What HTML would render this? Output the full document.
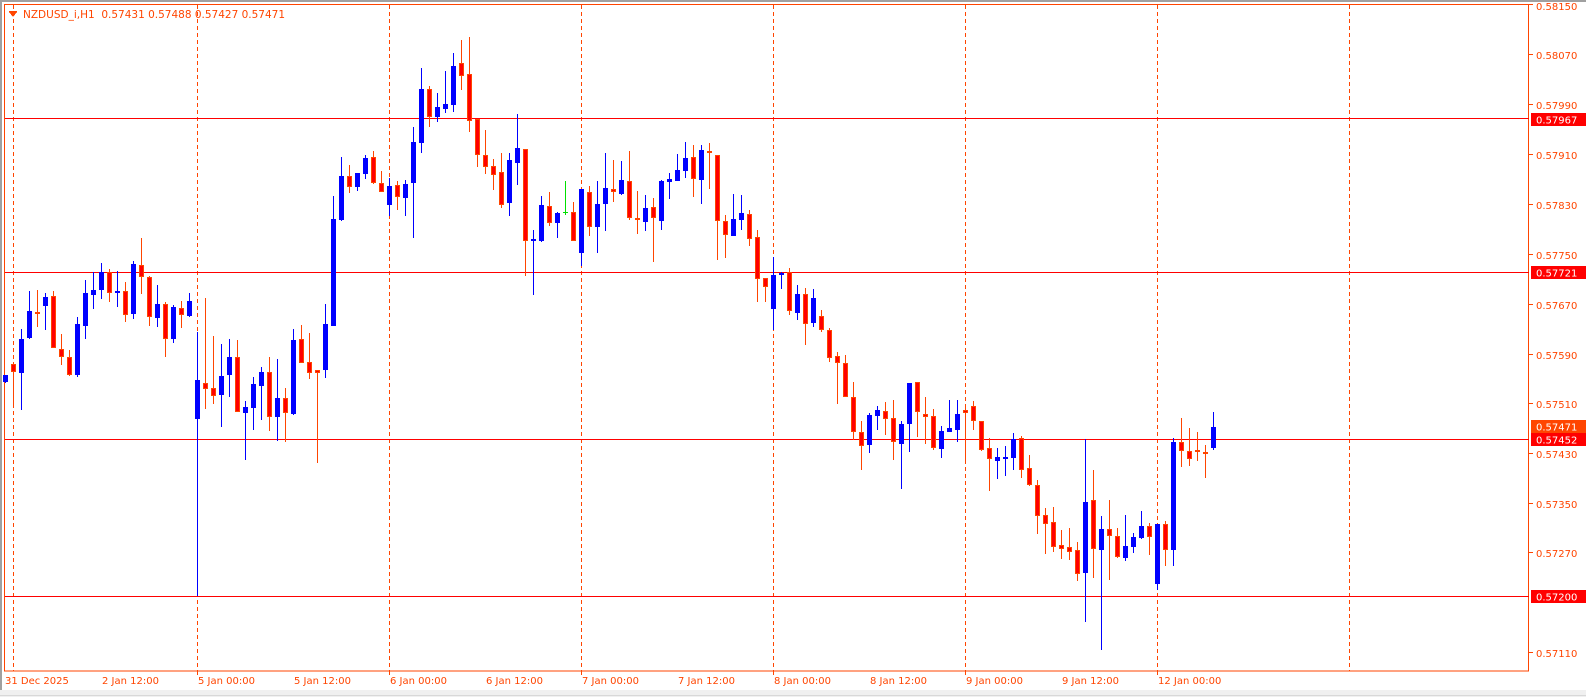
<!DOCTYPE html>
<html><head><meta charset="utf-8"><style>
html,body{margin:0;padding:0;background:#fff;width:1586px;height:697px;overflow:hidden}
svg{display:block}
text{font-family:"DejaVu Sans","Liberation Sans",sans-serif;font-size:10px;fill:#ff4500}
.hd{white-space:pre;font-size:10.5px}
.bl line{stroke:#0000ff}.bl rect{fill:#0000ff}
.rd line{stroke:#ff4500}.rd rect{fill:#ff0000;stroke:#ff4500;stroke-width:1}
</style></head><body>
<svg width="1586" height="697" xmlns="http://www.w3.org/2000/svg" shape-rendering="crispEdges">
<rect x="0" y="0" width="1586" height="697" fill="#fff"/>
<rect x="0" y="0" width="1586" height="2" fill="#a0a0a0"/>
<rect x="0" y="0" width="2" height="697" fill="#a0a0a0"/>
<rect x="0" y="690" width="1586" height="7" fill="#f0f0f0"/>
<line x1="0" y1="695.5" x2="1586" y2="695.5" stroke="#d8d8d8"/>
<rect x="4.5" y="4.5" width="1524" height="666.5" fill="none" stroke="#ff4500"/>
<g stroke="#ff4500" stroke-dasharray="4,3">
<line x1="13.5" y1="5" x2="13.5" y2="671"/><line x1="197.5" y1="5" x2="197.5" y2="671"/>
<line x1="389.5" y1="5" x2="389.5" y2="671"/><line x1="581.5" y1="5" x2="581.5" y2="671"/>
<line x1="773.5" y1="5" x2="773.5" y2="671"/><line x1="965.5" y1="5" x2="965.5" y2="671"/>
<line x1="1157.5" y1="5" x2="1157.5" y2="671"/><line x1="1349.5" y1="5" x2="1349.5" y2="671"/>
</g>
<g stroke="#ff0000">
<line x1="5" y1="118.5" x2="1529" y2="118.5"/><line x1="5" y1="272.5" x2="1529" y2="272.5"/>
<line x1="5" y1="439.5" x2="1529" y2="439.5"/><line x1="5" y1="596.5" x2="1529" y2="596.5"/>
</g>
<rect x="9" y="11" width="8" height="1" fill="#ff4500"/>
<polygon points="9,12 17,12 13,17" fill="#ff4500"/>
<text class="hd" x="23" y="18" xml:space="preserve">NZDUSD_i,H1  0.57431 0.57488 0.57427 0.57471</text>
<g stroke="#ff4500">
<line x1="1529" y1="4.5" x2="1533" y2="4.5"/><line x1="1529" y1="54.5" x2="1533" y2="54.5"/><line x1="1529" y1="104.5" x2="1533" y2="104.5"/><line x1="1529" y1="154.5" x2="1533" y2="154.5"/><line x1="1529" y1="204.5" x2="1533" y2="204.5"/><line x1="1529" y1="254.5" x2="1533" y2="254.5"/><line x1="1529" y1="304.5" x2="1533" y2="304.5"/><line x1="1529" y1="354.5" x2="1533" y2="354.5"/><line x1="1529" y1="403.5" x2="1533" y2="403.5"/><line x1="1529" y1="453.5" x2="1533" y2="453.5"/><line x1="1529" y1="503.5" x2="1533" y2="503.5"/><line x1="1529" y1="552.5" x2="1533" y2="552.5"/><line x1="1529" y1="652.5" x2="1533" y2="652.5"/>
</g>
<g>
<text x="1536" y="10">0.58150</text><text x="1536" y="59">0.58070</text><text x="1536" y="109">0.57990</text><text x="1536" y="159">0.57910</text><text x="1536" y="209">0.57830</text><text x="1536" y="259">0.57750</text><text x="1536" y="309">0.57670</text><text x="1536" y="359">0.57590</text><text x="1536" y="408">0.57510</text><text x="1536" y="458">0.57430</text><text x="1536" y="508">0.57350</text><text x="1536" y="557">0.57270</text><text x="1536" y="657">0.57110</text>
</g>
<rect x="1531" y="113" width="55" height="13" fill="#ff0000"/><text x="1536" y="123.5" style="fill:#fff">0.57967</text>
<rect x="1531" y="266" width="55" height="13" fill="#ff0000"/><text x="1536" y="276.5" style="fill:#fff">0.57721</text>
<rect x="1531" y="420" width="55" height="13" fill="#ff4500"/><text x="1536" y="430.5" style="fill:#fff">0.57471</text>
<rect x="1531" y="433" width="55" height="13" fill="#ff0000"/><text x="1536" y="443.5" style="fill:#fff">0.57452</text>
<rect x="1531" y="590" width="55" height="13" fill="#ff0000"/><text x="1536" y="600.5" style="fill:#fff">0.57200</text>
<g stroke="#ff4500"><line x1="197.5" y1="671" x2="197.5" y2="675"/><line x1="389.5" y1="671" x2="389.5" y2="675"/><line x1="581.5" y1="671" x2="581.5" y2="675"/><line x1="773.5" y1="671" x2="773.5" y2="675"/><line x1="965.5" y1="671" x2="965.5" y2="675"/><line x1="1157.5" y1="671" x2="1157.5" y2="675"/></g>
<text x="5" y="684">31 Dec 2025</text><text x="102" y="684">2 Jan 12:00</text><text x="198" y="684">5 Jan 00:00</text><text x="294" y="684">5 Jan 12:00</text><text x="390" y="684">6 Jan 00:00</text><text x="486" y="684">6 Jan 12:00</text><text x="582" y="684">7 Jan 00:00</text><text x="678" y="684">7 Jan 12:00</text><text x="774" y="684">8 Jan 00:00</text><text x="870" y="684">8 Jan 12:00</text><text x="966" y="684">9 Jan 00:00</text><text x="1062" y="684">9 Jan 12:00</text><text x="1158" y="684">12 Jan 00:00</text>
<g class="bl">
<line x1="5.5" y1="375" x2="5.5" y2="383"/><rect x="3" y="375" width="5" height="7"/>
<line x1="21.5" y1="329" x2="21.5" y2="410"/><rect x="19" y="339" width="5" height="34"/>
<line x1="29.5" y1="291" x2="29.5" y2="339"/><rect x="27" y="311" width="5" height="27"/>
<line x1="45.5" y1="293" x2="45.5" y2="330"/><rect x="43" y="297" width="5" height="9"/>
<line x1="77.5" y1="317" x2="77.5" y2="377"/><rect x="75" y="324" width="5" height="51"/>
<line x1="85.5" y1="280" x2="85.5" y2="339"/><rect x="83" y="293" width="5" height="33"/>
<line x1="93.5" y1="272" x2="93.5" y2="309"/><rect x="91" y="290" width="5" height="5"/>
<line x1="101.5" y1="263" x2="101.5" y2="299"/><rect x="99" y="272" width="5" height="18"/>
<line x1="117.5" y1="271" x2="117.5" y2="307"/><rect x="115" y="291" width="5" height="2"/>
<line x1="133.5" y1="261" x2="133.5" y2="319"/><rect x="131" y="264" width="5" height="50"/>
<line x1="157.5" y1="285" x2="157.5" y2="327"/><rect x="155" y="304" width="5" height="14"/>
<line x1="173.5" y1="305" x2="173.5" y2="343"/><rect x="171" y="307" width="5" height="32"/>
<line x1="189.5" y1="293" x2="189.5" y2="317"/><rect x="187" y="301" width="5" height="15"/>
<line x1="197.5" y1="332" x2="197.5" y2="596"/><rect x="195" y="380" width="5" height="39"/>
<line x1="221.5" y1="344" x2="221.5" y2="427"/><rect x="219" y="376" width="5" height="19"/>
<line x1="229.5" y1="339" x2="229.5" y2="397"/><rect x="227" y="357" width="5" height="18"/>
<line x1="245.5" y1="401" x2="245.5" y2="460"/><rect x="243" y="407" width="5" height="6"/>
<line x1="253.5" y1="377" x2="253.5" y2="430"/><rect x="251" y="384" width="5" height="24"/>
<line x1="261.5" y1="367" x2="261.5" y2="420"/><rect x="259" y="372" width="5" height="14"/>
<line x1="277.5" y1="359" x2="277.5" y2="441"/><rect x="275" y="398" width="5" height="19"/>
<line x1="293.5" y1="329" x2="293.5" y2="415"/><rect x="291" y="340" width="5" height="74"/>
<line x1="325.5" y1="304" x2="325.5" y2="378"/><rect x="323" y="324" width="5" height="46"/>
<line x1="333.5" y1="196" x2="333.5" y2="326"/><rect x="331" y="219" width="5" height="107"/>
<line x1="341.5" y1="157" x2="341.5" y2="221"/><rect x="339" y="176" width="5" height="44"/>
<line x1="357.5" y1="173" x2="357.5" y2="191"/><rect x="355" y="173" width="5" height="14"/>
<line x1="365.5" y1="155" x2="365.5" y2="179"/><rect x="363" y="158" width="5" height="16"/>
<line x1="389.5" y1="178" x2="389.5" y2="216"/><rect x="387" y="186" width="5" height="19"/>
<line x1="405.5" y1="180" x2="405.5" y2="216"/><rect x="403" y="184" width="5" height="14"/>
<line x1="413.5" y1="127" x2="413.5" y2="238"/><rect x="411" y="142" width="5" height="41"/>
<line x1="421.5" y1="68" x2="421.5" y2="153"/><rect x="419" y="89" width="5" height="54"/>
<line x1="437.5" y1="93" x2="437.5" y2="122"/><rect x="435" y="107" width="5" height="10"/>
<line x1="445.5" y1="71" x2="445.5" y2="113"/><rect x="443" y="104" width="5" height="5"/>
<line x1="453.5" y1="53" x2="453.5" y2="112"/><rect x="451" y="66" width="5" height="39"/>
<line x1="509.5" y1="153" x2="509.5" y2="216"/><rect x="507" y="160" width="5" height="43"/>
<line x1="517.5" y1="114" x2="517.5" y2="185"/><rect x="515" y="148" width="5" height="15"/>
<line x1="533.5" y1="230" x2="533.5" y2="295"/><rect x="531" y="239" width="5" height="2"/>
<line x1="541.5" y1="196" x2="541.5" y2="242"/><rect x="539" y="205" width="5" height="36"/>
<line x1="557.5" y1="212" x2="557.5" y2="238"/><rect x="555" y="213" width="5" height="10"/>
<line x1="581.5" y1="189" x2="581.5" y2="266"/><rect x="579" y="189" width="5" height="64"/>
<line x1="597.5" y1="181" x2="597.5" y2="253"/><rect x="595" y="204" width="5" height="23"/>
<line x1="605.5" y1="153" x2="605.5" y2="231"/><rect x="603" y="188" width="5" height="16"/>
<line x1="621.5" y1="161" x2="621.5" y2="195"/><rect x="619" y="180" width="5" height="14"/>
<line x1="645.5" y1="195" x2="645.5" y2="231"/><rect x="643" y="208" width="5" height="14"/>
<line x1="661.5" y1="180" x2="661.5" y2="230"/><rect x="659" y="181" width="5" height="40"/>
<line x1="669.5" y1="173" x2="669.5" y2="199"/><rect x="667" y="179" width="5" height="3"/>
<line x1="677.5" y1="154" x2="677.5" y2="181"/><rect x="675" y="170" width="5" height="11"/>
<line x1="685.5" y1="142" x2="685.5" y2="178"/><rect x="683" y="158" width="5" height="13"/>
<line x1="701.5" y1="145" x2="701.5" y2="204"/><rect x="699" y="150" width="5" height="30"/>
<line x1="733.5" y1="194" x2="733.5" y2="236"/><rect x="731" y="219" width="5" height="17"/>
<line x1="741.5" y1="195" x2="741.5" y2="230"/><rect x="739" y="213" width="5" height="7"/>
<line x1="773.5" y1="257" x2="773.5" y2="330"/><rect x="771" y="275" width="5" height="34"/>
<line x1="781.5" y1="272" x2="781.5" y2="289"/><rect x="779" y="273" width="5" height="2"/>
<line x1="797.5" y1="285" x2="797.5" y2="320"/><rect x="795" y="294" width="5" height="19"/>
<line x1="813.5" y1="289" x2="813.5" y2="327"/><rect x="811" y="298" width="5" height="25"/>
<line x1="869.5" y1="413" x2="869.5" y2="453"/><rect x="867" y="415" width="5" height="30"/>
<line x1="877.5" y1="406" x2="877.5" y2="430"/><rect x="875" y="410" width="5" height="6"/>
<line x1="901.5" y1="421" x2="901.5" y2="489"/><rect x="899" y="424" width="5" height="20"/>
<line x1="909.5" y1="383" x2="909.5" y2="452"/><rect x="907" y="383" width="5" height="41"/>
<line x1="941.5" y1="426" x2="941.5" y2="458"/><rect x="939" y="431" width="5" height="18"/>
<line x1="949.5" y1="400" x2="949.5" y2="432"/><rect x="947" y="428" width="5" height="4"/>
<line x1="957.5" y1="400" x2="957.5" y2="442"/><rect x="955" y="414" width="5" height="16"/>
<line x1="997.5" y1="448" x2="997.5" y2="479"/><rect x="995" y="457" width="5" height="4"/>
<line x1="1005.5" y1="446" x2="1005.5" y2="476"/><rect x="1003" y="457" width="5" height="2"/>
<line x1="1013.5" y1="433" x2="1013.5" y2="470"/><rect x="1011" y="439" width="5" height="19"/>
<line x1="1085.5" y1="439" x2="1085.5" y2="622"/><rect x="1083" y="502" width="5" height="71"/>
<line x1="1101.5" y1="516" x2="1101.5" y2="650"/><rect x="1099" y="529" width="5" height="21"/>
<line x1="1125.5" y1="515" x2="1125.5" y2="561"/><rect x="1123" y="546" width="5" height="12"/>
<line x1="1133.5" y1="533" x2="1133.5" y2="553"/><rect x="1131" y="537" width="5" height="10"/>
<line x1="1141.5" y1="511" x2="1141.5" y2="539"/><rect x="1139" y="526" width="5" height="12"/>
<line x1="1157.5" y1="524" x2="1157.5" y2="590"/><rect x="1155" y="524" width="5" height="60"/>
<line x1="1173.5" y1="438" x2="1173.5" y2="566"/><rect x="1171" y="442" width="5" height="108"/>
<line x1="1213.5" y1="412" x2="1213.5" y2="450"/><rect x="1211" y="427" width="5" height="21"/>
</g>
<line x1="565.5" y1="181" x2="565.5" y2="215" stroke="#00e000"/><line x1="563" y1="212.5" x2="568" y2="212.5" stroke="#00e000"/>
<g class="rd">
<line x1="13.5" y1="363" x2="13.5" y2="408"/><rect x="11.5" y="364.5" width="4" height="7"/>
<line x1="37.5" y1="290" x2="37.5" y2="327"/><rect x="35.5" y="312.5" width="4" height="1"/>
<line x1="53.5" y1="291" x2="53.5" y2="348"/><rect x="51.5" y="296.5" width="4" height="51"/>
<line x1="61.5" y1="334" x2="61.5" y2="365"/><rect x="59.5" y="349.5" width="4" height="7"/>
<line x1="69.5" y1="350" x2="69.5" y2="376"/><rect x="67.5" y="357.5" width="4" height="17"/>
<line x1="109.5" y1="269" x2="109.5" y2="302"/><rect x="107.5" y="272.5" width="4" height="20"/>
<line x1="125.5" y1="282" x2="125.5" y2="322"/><rect x="123.5" y="291.5" width="4" height="23"/>
<line x1="141.5" y1="238" x2="141.5" y2="294"/><rect x="139.5" y="265.5" width="4" height="11"/>
<line x1="149.5" y1="276" x2="149.5" y2="326"/><rect x="147.5" y="277.5" width="4" height="39"/>
<line x1="165.5" y1="302" x2="165.5" y2="357"/><rect x="163.5" y="304.5" width="4" height="34"/>
<line x1="181.5" y1="301" x2="181.5" y2="328"/><rect x="179.5" y="308.5" width="4" height="6"/>
<line x1="205.5" y1="298" x2="205.5" y2="409"/><rect x="203.5" y="383.5" width="4" height="5"/>
<line x1="213.5" y1="336" x2="213.5" y2="404"/><rect x="211.5" y="388.5" width="4" height="7"/>
<line x1="237.5" y1="340" x2="237.5" y2="412"/><rect x="235.5" y="357.5" width="4" height="54"/>
<line x1="269.5" y1="357" x2="269.5" y2="431"/><rect x="267.5" y="372.5" width="4" height="44"/>
<line x1="285.5" y1="388" x2="285.5" y2="442"/><rect x="283.5" y="398.5" width="4" height="14"/>
<line x1="301.5" y1="325" x2="301.5" y2="363"/><rect x="299.5" y="339.5" width="4" height="23"/>
<line x1="309.5" y1="333" x2="309.5" y2="379"/><rect x="307.5" y="362.5" width="4" height="10"/>
<line x1="317.5" y1="370" x2="317.5" y2="463"/><rect x="315.5" y="370.5" width="4" height="2"/>
<line x1="349.5" y1="165" x2="349.5" y2="193"/><rect x="347.5" y="176.5" width="4" height="10"/>
<line x1="373.5" y1="151" x2="373.5" y2="184"/><rect x="371.5" y="157.5" width="4" height="25"/>
<line x1="381.5" y1="171" x2="381.5" y2="192"/><rect x="379.5" y="183.5" width="4" height="8"/>
<line x1="397.5" y1="181" x2="397.5" y2="210"/><rect x="395.5" y="185.5" width="4" height="11"/>
<line x1="429.5" y1="86" x2="429.5" y2="127"/><rect x="427.5" y="89.5" width="4" height="27"/>
<line x1="461.5" y1="40" x2="461.5" y2="90"/><rect x="459.5" y="63.5" width="4" height="12"/>
<line x1="469.5" y1="37" x2="469.5" y2="132"/><rect x="467.5" y="74.5" width="4" height="46"/>
<line x1="477.5" y1="119" x2="477.5" y2="167"/><rect x="475.5" y="119.5" width="4" height="35"/>
<line x1="485.5" y1="130" x2="485.5" y2="174"/><rect x="483.5" y="155.5" width="4" height="11"/>
<line x1="493.5" y1="159" x2="493.5" y2="190"/><rect x="491.5" y="166.5" width="4" height="8"/>
<line x1="501.5" y1="153" x2="501.5" y2="208"/><rect x="499.5" y="172.5" width="4" height="32"/>
<line x1="525.5" y1="149" x2="525.5" y2="276"/><rect x="523.5" y="149.5" width="4" height="91"/>
<line x1="549.5" y1="192" x2="549.5" y2="226"/><rect x="547.5" y="206.5" width="4" height="16"/>
<line x1="573.5" y1="202" x2="573.5" y2="241"/><rect x="571.5" y="212.5" width="4" height="28"/>
<line x1="589.5" y1="186" x2="589.5" y2="236"/><rect x="587.5" y="192.5" width="4" height="34"/>
<line x1="613.5" y1="160" x2="613.5" y2="202"/><rect x="611.5" y="189.5" width="4" height="2"/>
<line x1="629.5" y1="151" x2="629.5" y2="220"/><rect x="627.5" y="181.5" width="4" height="36"/>
<line x1="637.5" y1="191" x2="637.5" y2="234"/><rect x="635.5" y="218.5" width="4" height="1"/>
<line x1="653.5" y1="198" x2="653.5" y2="262"/><rect x="651.5" y="207.5" width="4" height="10"/>
<line x1="693.5" y1="145" x2="693.5" y2="197"/><rect x="691.5" y="157.5" width="4" height="21"/>
<line x1="709.5" y1="143" x2="709.5" y2="189"/><rect x="707.5" y="151.5" width="4" height="1"/>
<line x1="717.5" y1="155" x2="717.5" y2="260"/><rect x="715.5" y="155.5" width="4" height="65"/>
<line x1="725.5" y1="215" x2="725.5" y2="258"/><rect x="723.5" y="221.5" width="4" height="13"/>
<line x1="749.5" y1="210" x2="749.5" y2="246"/><rect x="747.5" y="214.5" width="4" height="24"/>
<line x1="757.5" y1="230" x2="757.5" y2="302"/><rect x="755.5" y="237.5" width="4" height="41"/>
<line x1="765.5" y1="278" x2="765.5" y2="302"/><rect x="763.5" y="278.5" width="4" height="8"/>
<line x1="789.5" y1="268" x2="789.5" y2="315"/><rect x="787.5" y="272.5" width="4" height="38"/>
<line x1="805.5" y1="288" x2="805.5" y2="345"/><rect x="803.5" y="294.5" width="4" height="29"/>
<line x1="821.5" y1="310" x2="821.5" y2="332"/><rect x="819.5" y="316.5" width="4" height="13"/>
<line x1="829.5" y1="328" x2="829.5" y2="362"/><rect x="827.5" y="330.5" width="4" height="27"/>
<line x1="837.5" y1="352" x2="837.5" y2="404"/><rect x="835.5" y="356.5" width="4" height="6"/>
<line x1="845.5" y1="355" x2="845.5" y2="397"/><rect x="843.5" y="363.5" width="4" height="33"/>
<line x1="853.5" y1="382" x2="853.5" y2="440"/><rect x="851.5" y="397.5" width="4" height="34"/>
<line x1="861.5" y1="421" x2="861.5" y2="470"/><rect x="859.5" y="432.5" width="4" height="13"/>
<line x1="885.5" y1="402" x2="885.5" y2="435"/><rect x="883.5" y="411.5" width="4" height="7"/>
<line x1="893.5" y1="400" x2="893.5" y2="460"/><rect x="891.5" y="418.5" width="4" height="23"/>
<line x1="917.5" y1="382" x2="917.5" y2="437"/><rect x="915.5" y="382.5" width="4" height="29"/>
<line x1="925.5" y1="397" x2="925.5" y2="444"/><rect x="923.5" y="414.5" width="4" height="2"/>
<line x1="933.5" y1="409" x2="933.5" y2="450"/><rect x="931.5" y="416.5" width="4" height="31"/>
<line x1="965.5" y1="406" x2="965.5" y2="463"/><rect x="963.5" y="410.5" width="4" height="2"/>
<line x1="973.5" y1="401" x2="973.5" y2="430"/><rect x="971.5" y="406.5" width="4" height="14"/>
<line x1="981.5" y1="421" x2="981.5" y2="451"/><rect x="979.5" y="421.5" width="4" height="28"/>
<line x1="989.5" y1="438" x2="989.5" y2="491"/><rect x="987.5" y="448.5" width="4" height="10"/>
<line x1="1021.5" y1="436" x2="1021.5" y2="478"/><rect x="1019.5" y="438.5" width="4" height="31"/>
<line x1="1029.5" y1="455" x2="1029.5" y2="486"/><rect x="1027.5" y="468.5" width="4" height="16"/>
<line x1="1037.5" y1="480" x2="1037.5" y2="534"/><rect x="1035.5" y="485.5" width="4" height="30"/>
<line x1="1045.5" y1="508" x2="1045.5" y2="554"/><rect x="1043.5" y="515.5" width="4" height="8"/>
<line x1="1053.5" y1="507" x2="1053.5" y2="552"/><rect x="1051.5" y="522.5" width="4" height="24"/>
<line x1="1061.5" y1="530" x2="1061.5" y2="559"/><rect x="1059.5" y="545.5" width="4" height="3"/>
<line x1="1069.5" y1="528" x2="1069.5" y2="560"/><rect x="1067.5" y="547.5" width="4" height="4"/>
<line x1="1077.5" y1="542" x2="1077.5" y2="581"/><rect x="1075.5" y="550.5" width="4" height="23"/>
<line x1="1093.5" y1="470" x2="1093.5" y2="578"/><rect x="1091.5" y="500.5" width="4" height="48"/>
<line x1="1109.5" y1="500" x2="1109.5" y2="580"/><rect x="1107.5" y="529.5" width="4" height="6"/>
<line x1="1117.5" y1="528" x2="1117.5" y2="558"/><rect x="1115.5" y="536.5" width="4" height="20"/>
<line x1="1149.5" y1="523" x2="1149.5" y2="555"/><rect x="1147.5" y="526.5" width="4" height="10"/>
<line x1="1165.5" y1="521" x2="1165.5" y2="566"/><rect x="1163.5" y="524.5" width="4" height="25"/>
<line x1="1181.5" y1="418" x2="1181.5" y2="467"/><rect x="1179.5" y="442.5" width="4" height="8"/>
<line x1="1189.5" y1="428" x2="1189.5" y2="466"/><rect x="1187.5" y="451.5" width="4" height="7"/>
<line x1="1197.5" y1="432" x2="1197.5" y2="461"/><rect x="1195.5" y="450.5" width="4" height="1"/>
<line x1="1205.5" y1="445" x2="1205.5" y2="478"/><rect x="1203.5" y="452.5" width="4" height="1"/>
</g>
</svg>
</body></html>
